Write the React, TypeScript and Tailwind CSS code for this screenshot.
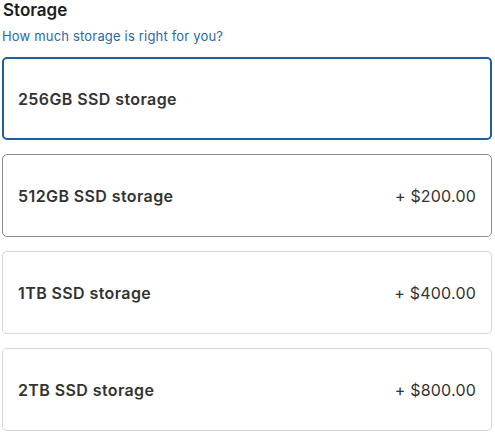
const options = [
	{ label: '256GB SSD storage', price: '', state: 'selected' },
	{ label: '512GB SSD storage', price: '+ $200.00', state: 'hover' },
	{ label: '1TB SSD storage', price: '+ $400.00', state: 'idle' },
	{ label: '2TB SSD storage', price: '+ $800.00', state: 'idle' },
]

export default function App() {
	return (
		<div className="w-[495px] h-[433px] bg-white pl-[2px] pr-[3px] font-['Inter','Liberation_Sans',sans-serif] text-[#333]">
			<h2 className="pl-[1px] text-[17px] leading-[20px] font-semibold text-[#1d1d1f]">Storage</h2>
			<p className="mt-[8px] text-[13px] leading-[16px] tracking-[0.18px] text-[#1f6aa8]">How much storage is right for you?</p>
			<div className="mt-[13px] flex flex-col gap-[14px]">
				{options.map((o) => (
					<div
						key={o.label}
						className={
							o.state === 'selected'
								? 'h-[83px] flex items-center justify-between rounded-[5px] border-2 border-[#1d5e9b] px-[14px]'
								: o.state === 'hover'
									? 'h-[83px] flex items-center justify-between rounded-[5px] border border-[#8c8c8c] px-[15px]'
									: 'h-[83px] flex items-center justify-between rounded-[5px] border border-[#d6d6d6] px-[15px]'
						}
					>
						<span className="text-[16px] tracking-[0.4px] font-semibold">{o.label}</span>
						{o.price && <span className="text-[16px] tracking-[0.2px]">{o.price}</span>}
					</div>
				))}
			</div>
		</div>
	)
}
